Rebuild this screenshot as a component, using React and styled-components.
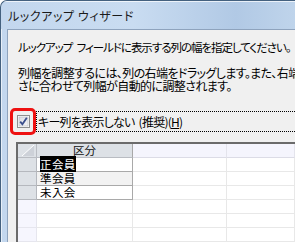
import React from 'react';
import styled, { createGlobalStyle } from 'styled-components';

const GlobalStyle = createGlobalStyle`
  html, body {
    margin: 0;
    padding: 0;
    background: #ffffff;
    overflow: hidden;
  }
  body {
    font-family: "Noto Sans CJK JP", "Noto Sans", sans-serif;
    font-feature-settings: "palt";
  }
`;

const StyledWindow = styled.div`
  width: 295px;
  height: 242px;
  display: flex;
  flex-direction: column;
  overflow: hidden;
  box-sizing: border-box;
  border-top: 1px solid #44617f;
  border-left: 1px solid #44617f;
  border-top-left-radius: 7px;
  background: linear-gradient(90deg, #c3d7ee 0%, #c9dcf1 45%, #b1c9e5 80%, #bfd4eb 100%);
`;

const StyledTitleBar = styled.div`
  height: 28px;
  flex: none;
  display: flex;
  align-items: center;
  padding-left: 7px;
  font-size: 12px;
  letter-spacing: 0.6px;
  color: #1a1a1a;
  white-space: nowrap;
  box-shadow: inset 0 1px 0 rgba(255, 255, 255, 0.7);
`;

const StyledFrameBody = styled.div`
  flex: 1;
  display: flex;
  padding-left: 6px;
  box-shadow: inset 1px 0 0 rgba(255, 255, 255, 0.6);
`;

const StyledClient = styled.div`
  flex: 1;
  background: #f0f0f0;
  border-top: 1px solid #8ea3bd;
  border-left: 1px solid #8ea3bd;
  padding: 11px 0 0 0;
  overflow: hidden;
  font-size: 12px;
  color: #000;
`;

const StyledText = styled.p`
  margin: 0 0 ${(props) => props.$gap || 0}px 10px;
  font-size: ${(props) => props.$size || 12}px;
  line-height: 13.5px;
  white-space: nowrap;
  word-spacing: 3px;
  letter-spacing: ${(props) => props.$tight || -0.6}px;
`;

const StyledCheckRow = styled.div`
  display: flex;
  align-items: center;
  margin: 15px 0 0 2px;
  height: 27px;
`;

const StyledHighlight = styled.div`
  width: 20px;
  height: 21px;
  border: 3px solid #ee1111;
  border-radius: 5px;
  display: flex;
  align-items: center;
  justify-content: center;
  flex: none;
`;

const StyledLabel = styled.div`
  flex: 1;
  height: 21px;
  padding-left: 1px;
  display: flex;
  align-items: center;
  white-space: nowrap;
  letter-spacing: -0.75px;
  word-spacing: 2px;
  border: 1px dotted #000;
  border-right: none;
  box-sizing: border-box;
`;

const StyledAccessKey = styled.span`
  text-decoration: underline;
`;

const StyledGrid = styled.div`
  margin: 7px 0 0 8px;
  border-top: 2px solid #6b6b6b;
  border-left: 2px solid #6b6b6b;
  display: grid;
  grid-template-columns: 19px 96px 94px 1fr;
  grid-auto-rows: 14px;
  background: #fff;
`;

const StyledCorner = styled.div`
  background: #dde1e6;
  border-right: 1px solid #b9bcc2;
  border-bottom: 1px solid #b9bcc2;
  display: flex;
  align-items: flex-end;
  justify-content: flex-end;
  padding: 0 2px 1px 0;
`;

const StyledHeaderCell = styled.div`
  background: ${(props) => (props.$empty ? '#f5f5fd' : '#dde1e6')};
  border-right: 1px solid ${(props) => (props.$empty ? '#e4e4ec' : '#a8a8a8')};
  border-bottom: 1px solid ${(props) => (props.$empty ? '#dcdce6' : '#b9bcc2')};
  font-size: 11.5px;
  line-height: 13px;
  text-align: center;
  color: #111;
`;

const StyledRowHead = styled.div`
  background: ${(props) => (props.$filled ? '#dde1e6' : '#f6f6fe')};
  border-right: 1px solid ${(props) => (props.$filled ? '#b5b8be' : '#e6e6ee')};
  border-bottom: 1px solid ${(props) => (props.$filled ? '#b5b8be' : '#e6e6ee')};
`;

const StyledCell = styled.div`
  background: ${(props) => (props.$alt ? '#f2f2f2' : '#ffffff')};
  border-right: 1px solid ${(props) => (props.$filled ? '#a9a9a9' : '#e8e8e8')};
  border-bottom: 1px solid ${(props) => (props.$filled ? '#a9a9a9' : '#e8e8e8')};
  padding-left: 3px;
  font-size: 11.5px;
  line-height: 13px;
  white-space: nowrap;
  letter-spacing: 0.4px;
`;

const StyledSelected = styled.span`
  background: #000;
  color: #fff;
`;

const CheckBox = () => (
  <svg width="13" height="13" viewBox="0 0 13 13">
    <defs>
      <linearGradient id="cbFill" x1="0" y1="0" x2="1" y2="1">
        <stop offset="0" stopColor="#d9dce3" />
        <stop offset="1" stopColor="#f6f6f8" />
      </linearGradient>
    </defs>
    <rect x="0.5" y="0.5" width="12" height="12" fill="#fff" stroke="#8e8f8f" />
    <rect x="2" y="2" width="9" height="9" fill="url(#cbFill)" stroke="#b4b8c0" strokeWidth="0.6" />
    <path d="M3.2 6.6 L5.4 9.2 L9.8 2.8" fill="none" stroke="#3b4f8c" strokeWidth="1.8" />
  </svg>
);

const CornerMark = () => (
  <svg width="12" height="11" viewBox="0 0 12 11">
    <polygon points="0,11 12,0 12,11" fill="#cdd1d8" />
    <line x1="0" y1="11" x2="12" y2="0" stroke="#ffffff" strokeWidth="1" />
  </svg>
);

const rows = [
  { name: '正会員', selected: true },
  { name: '準会員', alt: true },
  { name: '未入会' },
];

const App = () => (
  <>
    <GlobalStyle />
    <StyledWindow>
      <StyledTitleBar>ルックアップ ウィザード</StyledTitleBar>
      <StyledFrameBody>
        <StyledClient>
          <StyledText $gap={11} $size={11.5} $tight={-1.05}>
            ルックアップ フィールドに表示する列の幅を指定してください。
          </StyledText>
          <StyledText>
            列幅を調整するには、列の右端をドラッグします。また、右端をダブルクリックすると、データの長
          </StyledText>
          <StyledText>さに合わせて列幅が自動的に調整されます。</StyledText>
          <StyledCheckRow>
            <StyledHighlight>
              <CheckBox />
            </StyledHighlight>
            <StyledLabel>
              キー列を表示しない (推奨)(<StyledAccessKey>H</StyledAccessKey>)
            </StyledLabel>
          </StyledCheckRow>
          <StyledGrid>
            <StyledCorner>
              <CornerMark />
            </StyledCorner>
            <StyledHeaderCell>区分</StyledHeaderCell>
            <StyledHeaderCell $empty />
            <StyledHeaderCell $empty />
            {rows.map((row) => (
              <React.Fragment key={row.name}>
                <StyledRowHead $filled />
                <StyledCell $filled $alt={row.alt}>
                  {row.selected ? <StyledSelected>{row.name}</StyledSelected> : row.name}
                </StyledCell>
                <StyledCell />
                <StyledCell />
              </React.Fragment>
            ))}
            {[0, 1, 2, 3].map((i) => (
              <React.Fragment key={i}>
                <StyledRowHead />
                <StyledCell />
                <StyledCell />
                <StyledCell />
              </React.Fragment>
            ))}
          </StyledGrid>
        </StyledClient>
      </StyledFrameBody>
    </StyledWindow>
  </>
);

export default App;
